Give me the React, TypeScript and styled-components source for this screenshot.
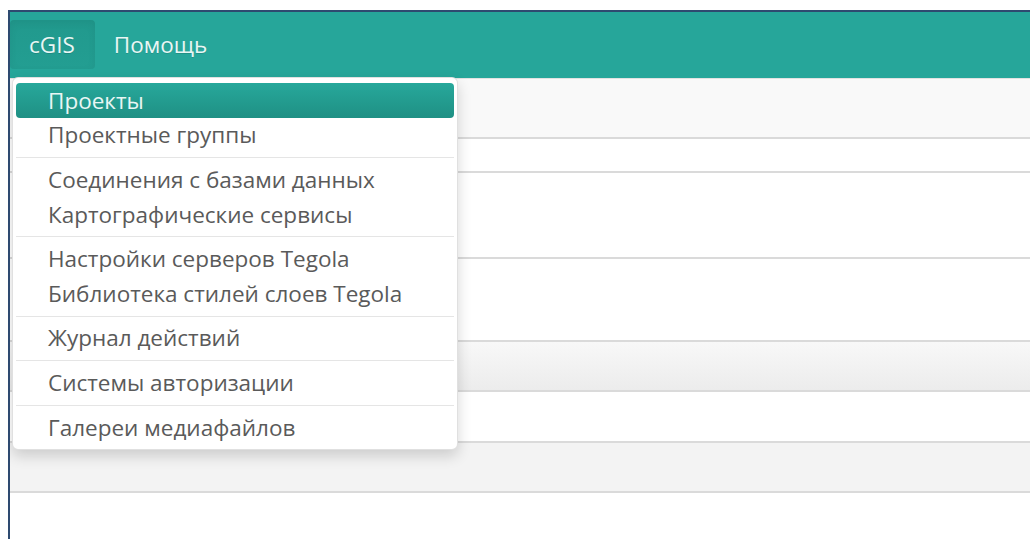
import React from 'react';
import styled, { createGlobalStyle } from 'styled-components';

const GlobalStyle = createGlobalStyle`
  html, body {
    margin: 0;
    padding: 0;
    background: #fff;
  }

  body {
    font-family: "Open Sans", "Noto Sans", sans-serif;
  }
`;

const Frame = styled.div`
  position: relative;
  margin: 10px 0 0 8px;
  height: 527px;
  border-left: 2px solid #2e4a70;
  border-top: 2px solid #2e4a70;
  overflow: hidden;
`;

const Navbar = styled.nav`
  height: 66px;
  background: #26a69a;
  display: flex;
  align-items: center;
`;

const NavLink = styled.a<{ $open?: boolean }>`
  height: 49px;
  display: flex;
  align-items: center;
  padding: 0 20px 0 19px;
  font-size: 22.5px;
  color: #e9f6f4;
  text-shadow: 0 1px 0 rgba(0, 0, 0, 0.12);
  border-radius: 4px;
  margin-bottom: 1px;
  background: ${(p) => (p.$open ? 'linear-gradient(#21998d, #239e92)' : 'transparent')};
  box-shadow: ${(p) => (p.$open ? 'inset 0 3px 8px rgba(0, 0, 0, 0.06)' : 'none')};
`;

const Rows = styled.div`
  border-top: 1px solid #e2e2e2;
`;

const Row = styled.div<{ $height: number; $tone: 'white' | 'light' | 'grey' | 'shade' }>`
  height: ${(p) => p.$height}px;
  border-bottom: 2px solid #dadada;
  background: ${(p) =>
    p.$tone === 'light'
      ? '#f9f9f9'
      : p.$tone === 'grey'
        ? '#f3f3f3'
        : p.$tone === 'shade'
          ? 'linear-gradient(#f8f8f8, #ececec)'
          : '#fff'};
`;

const Menu = styled.ul`
  position: absolute;
  top: 65px;
  left: 2px;
  width: 444px;
  margin: 0;
  padding: 5px 0;
  list-style: none;
  background: #fff;
  border: 1px solid rgba(0, 0, 0, 0.12);
  border-radius: 6px;
  box-shadow: 0 6px 14px rgba(0, 0, 0, 0.16);
`;

const MenuItem = styled.li<{ $active?: boolean }>`
  height: 34.6px;
  display: flex;
  align-items: center;
  margin: 0 3px;
  padding: 0 32px;
  font-size: 22.5px;
  border-radius: 4px;
  white-space: nowrap;
  color: ${(p) => (p.$active ? '#e9f6f4' : '#5a5a5a')};
  background: ${(p) => (p.$active ? 'linear-gradient(#27a89b, #1f9084)' : 'transparent')};
`;

const Divider = styled.li`
  height: 1px;
  margin: 5px 3px 4px;
  background: #e5e5e5;
`;

type Entry = { label: string; active?: boolean } | 'divider';

const menu: Entry[] = [
  { label: 'Проекты', active: true },
  { label: 'Проектные группы' },
  'divider',
  { label: 'Соединения с базами данных' },
  { label: 'Картографические сервисы' },
  'divider',
  { label: 'Настройки серверов Tegola' },
  { label: 'Библиотека стилей слоев Tegola' },
  'divider',
  { label: 'Журнал действий' },
  'divider',
  { label: 'Системы авторизации' },
  'divider',
  { label: 'Галереи медиафайлов' },
];

const rows: { height: number; tone: 'white' | 'light' | 'grey' | 'shade' }[] = [
  { height: 58, tone: 'light' },
  { height: 32, tone: 'white' },
  { height: 84, tone: 'white' },
  { height: 81, tone: 'white' },
  { height: 48, tone: 'shade' },
  { height: 49, tone: 'white' },
  { height: 48, tone: 'grey' },
];

export default function App() {
  return (
    <>
      <GlobalStyle />
      <Frame>
        <Navbar>
          <NavLink $open>cGIS</NavLink>
          <NavLink>Помощь</NavLink>
        </Navbar>
        <Rows>
          {rows.map((row, i) => (
            <Row key={i} $height={row.height} $tone={row.tone} />
          ))}
        </Rows>
        <Menu>
          {menu.map((entry, i) =>
            entry === 'divider' ? (
              <Divider key={i} />
            ) : (
              <MenuItem key={i} $active={entry.active}>
                {entry.label}
              </MenuItem>
            ),
          )}
        </Menu>
      </Frame>
    </>
  );
}
